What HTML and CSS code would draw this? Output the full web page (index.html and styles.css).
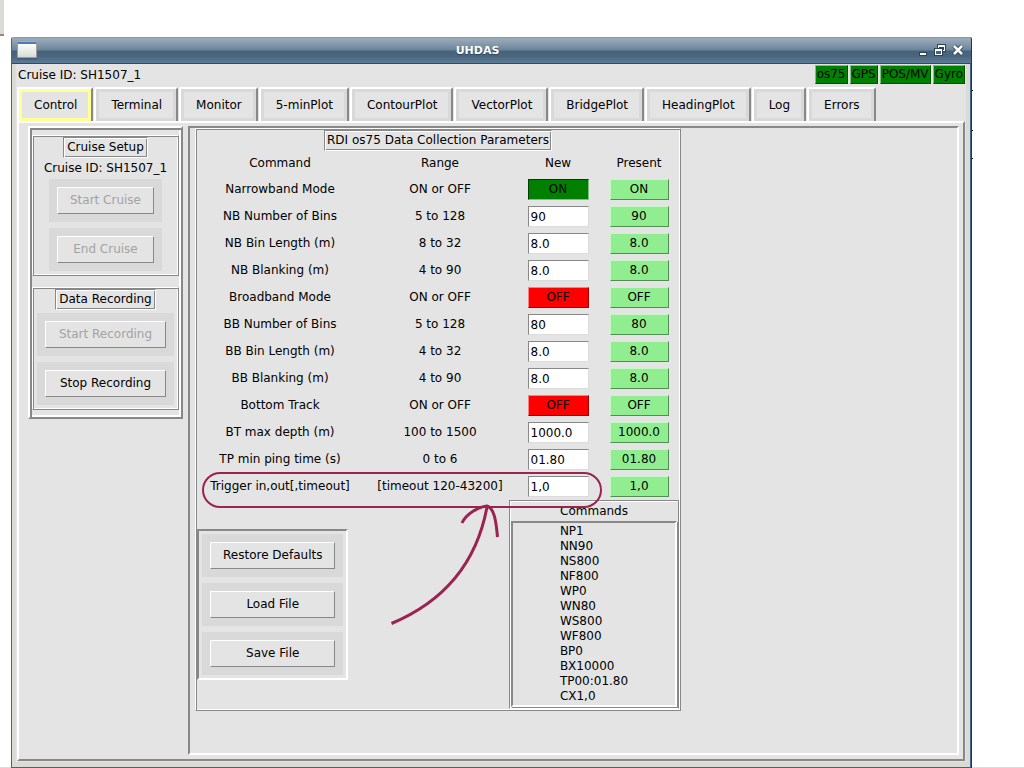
FILE: index.html
```
<!DOCTYPE html>
<html lang="en">
<head>
<meta charset="utf-8">
<title>UHDAS</title>
<link rel="stylesheet" href="styles.css">
</head>
<body>
<div class="desk-edge"></div>
<div class="desk-line"></div>
<i class="tick tick-a"></i><i class="tick tick-b"></i><i class="tick tick-c"></i>
<div class="window">
  <header class="titlebar">
    <svg class="app-icon" width="22" height="20" viewBox="0 0 22 20" aria-hidden="true">
      <defs><linearGradient id="g" x1="0" y1="0" x2="0" y2="1"><stop offset="0" stop-color="#fff"/><stop offset="1" stop-color="#d9dcd6"/></linearGradient></defs>
      <rect x="1" y="1" width="20" height="18" rx="1" fill="#38536b" opacity=".5"/>
      <rect x="1" y="1" width="20" height="16" rx="1" fill="#9a9d9a"/>
      <rect x="2" y="2" width="18" height="14" fill="url(#g)"/>
      <rect x="2" y="1" width="18" height="2" fill="#4a7ab8"/>
      <rect x="2" y="0" width="18" height="1" fill="#a5aeb8"/>
    </svg>
    <h1 class="title">UHDAS</h1>
    <div class="win-controls">
      <button class="win-btn" aria-label="Minimize"><svg width="12" height="14" viewBox="0 0 12 14"><rect x="2" y="8" width="8" height="4" fill="#2b4258"/><rect x="3" y="9" width="6" height="2" fill="#fff"/></svg></button>
      <button class="win-btn" aria-label="Restore"><svg width="14" height="14" viewBox="0 0 14 14"><path d="M4 0h9v8h-3v4H1V4h3z" fill="#2b4258"/><path d="M5 1h7v6h-2V6h1V3H6v1H5z" fill="#fff"/><path d="M2 5h7v6H2z" fill="#fff"/><path d="M3 7h5v3H3z" fill="#486480"/></svg></button>
      <button class="win-btn" aria-label="Close"><svg width="14" height="14" viewBox="0 0 14 14"><path d="M3 2l8 8M11 2l-8 8" stroke="#2b4258" stroke-width="4.500"/><path d="M3 2l8 8M11 2l-8 8" stroke="#fff" stroke-width="2.500"/></svg></button>
    </div>
  </header>
  <div class="body">
    <div class="status">
      <span class="status-text">Cruise ID: SH1507_1</span>
      <div class="lamps"><span class="lamp">os75</span><span class="lamp">GPS</span><span class="lamp">POS/MV</span><span class="lamp">Gyro</span></div>
    </div>
    <nav class="tabs" role="tablist">
      <button class="tab selected" role="tab" aria-selected="true">Control</button>
      <button class="tab" role="tab">Terminal</button>
      <button class="tab" role="tab">Monitor</button>
      <button class="tab" role="tab">5-minPlot</button>
      <button class="tab" role="tab">ContourPlot</button>
      <button class="tab" role="tab">VectorPlot</button>
      <button class="tab" role="tab">BridgePlot</button>
      <button class="tab" role="tab">HeadingPlot</button>
      <button class="tab" role="tab">Log</button>
      <button class="tab" role="tab">Errors</button>
    </nav>
    <main class="page">
      <aside class="side">
        <section class="group">
          <h2 class="caption">Cruise Setup</h2>
          <p class="cruise">Cruise ID: SH1507_1</p>
          <div class="pads narrow">
            <div class="pad"><button class="btn" disabled>Start Cruise</button></div>
            <div class="pad"><button class="btn" disabled>End Cruise</button></div>
          </div>
        </section>
        <section class="group">
          <h2 class="caption">Data Recording</h2>
          <div class="pads">
            <div class="pad"><button class="btn" disabled>Start Recording</button></div>
            <div class="pad"><button class="btn">Stop Recording</button></div>
          </div>
        </section>
      </aside>
      <div class="work">
        <section class="params">
          <h2 class="caption snug">RDI os75 Data Collection Parameters</h2>
          <table class="grid">
            <colgroup><col class="c-cmd"><col class="c-range"><col class="c-new"><col class="c-now"></colgroup>
            <thead><tr><th>Command</th><th>Range</th><th>New</th><th>Present</th></tr></thead>
            <tbody>
              <tr><td>Narrowband Mode</td><td>ON or OFF</td><td><button class="toggle on" aria-label="Narrowband Mode">ON</button></td><td><span class="now">ON</span></td></tr>
              <tr><td><label for="f1">NB Number of Bins</label></td><td>5 to 128</td><td><input class="field" id="f1" value="90"></td><td><span class="now">90</span></td></tr>
              <tr><td><label for="f2">NB Bin Length (m)</label></td><td>8 to 32</td><td><input class="field" id="f2" value="8.0"></td><td><span class="now">8.0</span></td></tr>
              <tr><td><label for="f3">NB Blanking (m)</label></td><td>4 to 90</td><td><input class="field" id="f3" value="8.0"></td><td><span class="now">8.0</span></td></tr>
              <tr><td>Broadband Mode</td><td>ON or OFF</td><td><button class="toggle off" aria-label="Broadband Mode">OFF</button></td><td><span class="now">OFF</span></td></tr>
              <tr><td><label for="f4">BB Number of Bins</label></td><td>5 to 128</td><td><input class="field" id="f4" value="80"></td><td><span class="now">80</span></td></tr>
              <tr><td><label for="f5">BB Bin Length (m)</label></td><td>4 to 32</td><td><input class="field" id="f5" value="8.0"></td><td><span class="now">8.0</span></td></tr>
              <tr><td><label for="f6">BB Blanking (m)</label></td><td>4 to 90</td><td><input class="field" id="f6" value="8.0"></td><td><span class="now">8.0</span></td></tr>
              <tr><td>Bottom Track</td><td>ON or OFF</td><td><button class="toggle off" aria-label="Bottom Track">OFF</button></td><td><span class="now">OFF</span></td></tr>
              <tr><td><label for="f7">BT max depth (m)</label></td><td>100 to 1500</td><td><input class="field" id="f7" value="1000.0"></td><td><span class="now">1000.0</span></td></tr>
              <tr><td><label for="f8">TP min ping time (s)</label></td><td>0 to 6</td><td><input class="field" id="f8" value="01.80"></td><td><span class="now">01.80</span></td></tr>
              <tr><td><label for="f9">Trigger in,out[,timeout]</label></td><td>[timeout 120-43200]</td><td><input class="field" id="f9" value="1,0"></td><td><span class="now">1,0</span></td></tr>
            </tbody>
          </table>
          <div class="lower">
            <div class="pads files">
              <div class="pad"><button class="btn">Restore Defaults</button></div>
              <div class="pad"><button class="btn">Load File</button></div>
              <div class="pad"><button class="btn">Save File</button></div>
            </div>
            <section class="commands">
              <h3 class="cmd-title">Commands</h3>
              <div class="cmd-box"><ul class="cmd-list"><li>NP1</li><li>NN90</li><li>NS800</li><li>NF800</li><li>WP0</li><li>WN80</li><li>WS800</li><li>WF800</li><li>BP0</li><li>BX10000</li><li>TP00:01.80</li><li>CX1,0</li></ul></div>
            </section>
          </div>
          <svg class="markup" width="410" height="160" viewBox="0 0 410 160" aria-hidden="true">
            <g fill="none" stroke="#9a2350">
              <rect x="3" y="3" width="398" height="34" rx="17" stroke-width="2"/>
              <path d="M191.500 153.500C245 131 277 91 287 37" stroke-width="3"/>
              <path d="M262 53C266 44 278 37 287 36C294 38 296 50 297.500 67" stroke-width="3"/>
            </g>
          </svg>
        </section>
      </div>
    </main>
  </div>
</div>
</body>
</html>
```
FILE: styles.css
```
* { box-sizing: border-box; }
body {
  margin: 0;
  min-height: 100vh;
  padding: 37px 52px 0 11px;
  display: flex;
  background: #fff;
  color: #000;
  font: 12px/15px "DejaVu Sans", sans-serif;
}
button, input { font: inherit; color: inherit; }
h1, h2, h3, p, ul { margin: 0; padding: 0; font: inherit; list-style: none; }

.desk-edge { position: absolute; left: 0; top: 0; width: 4px; height: 36px; background: #dcdad5; border-bottom: 2px solid #8d8a84; }
.desk-line { position: absolute; left: 0; right: 0; bottom: 0; height: 1px; background: #dcdcdc; }
.tick { position: absolute; right: 51px; width: 1px; height: 1px; background: #000; }
.tick-a { top: 90px; }
.tick-b { top: 130px; }
.tick-c { top: 158px; }

.window {
  position: relative;
  flex: 1;
  display: flex;
  flex-direction: column;
  background: #dcdad5;
  border: 1px solid;
  border-width: 0 1px 1px;
  border-color: #1d3550 #1d3550 #1d3550 #3f6389;
  box-shadow: inset -1px -1px #3f6389;
  border-radius: 2px 2px 0 0;
}
.titlebar {
  display: flex;
  align-items: center;
  height: 27px;
  padding: 0 6px 0 4px;
  background: linear-gradient(#8397a9 0, #9aabba 2px, #6b8499 13px, #47627b 14px, #4a667f 19px, #5c7b96 26px, #2f4a63 26px);
  border-radius: 2px 2px 0 0;
}
.app-icon { flex: none; }
.title { flex: 1; text-align: center; color: #fff; font-size: 11px; font-weight: bold; text-shadow: 0 1px 1px #2b4258; }
.win-controls { display: flex; gap: 4px; }
.win-btn { display: flex; padding: 0; border: 0; background: none; }

.body { flex: 1; display: flex; flex-direction: column; margin: 0 5px 6px 4px; background: #e4e4e4; }
.status { display: flex; justify-content: space-between; padding: 1px 1px 0 2px; line-height: 19px; }
.status-text { padding-top: 1px; }
.lamps { display: flex; align-self: flex-start; gap: 2px; }
.lamp { padding: 0 1px; line-height: 17px; color: #000; background: #008000; border: 1px solid; border-color: #7fbf7f #005000 #005000 #7fbf7f; }
.tabs { display: flex; gap: 1px; padding: 2px 0 0 1px; }
.tab {
  height: 34px;
  padding: 0 14px 0 15px;
  background: #e4e4e4;
  border: solid;
  border-width: 2px 2px 0;
  border-color: #fff #888 #888 #fff;
  border-radius: 2px 2px 0 0;
  box-shadow: inset 0 0 0 3px #d9d9d9;
}
.tab.selected { box-shadow: inset 0 0 0 3px #ffff99; }
.page {
  flex: 1;
  display: flex;
  align-items: flex-start;
  gap: 5px;
  margin: 0 1px 1px;
  padding: 3px 4px 4px 9px;
  border: 2px solid;
  border-color: #fff #888 #888 #fff;
}
.side {
  display: flex;
  flex-direction: column;
  gap: 11px;
  min-width: 155px;
  padding: 7px 2px 7px;
  border: 2px solid;
  border-color: #fff #888 #888 #fff;
  box-shadow: inset 2px 2px #888, inset -2px -2px #fff;
}
.group, .params {
  border: 1px solid;
  border-color: #fff #888 #888 #fff;
  box-shadow: inset 1px 1px #888, inset -1px -1px #fff;
}
.group { display: flex; flex-direction: column; align-items: center; padding: 1px 4px 4px; }
.caption {
  padding: 2px 3px;
  border: 1px solid;
  border-color: #888 #fff #fff #888;
  box-shadow: inset 1px 1px #fff, inset -1px -1px #888;
}
.snug { padding: 2px; }
.cruise { padding: 3px 0; }
.pads { display: flex; flex-direction: column; gap: 6px; align-self: stretch; margin-top: 3px; }
.narrow { align-self: center; margin-top: 0; }
.pad { display: flex; padding: 8px; background: #d9d9d9; }
.btn { flex: 1; height: 27px; padding: 0 12px; background: #e4e4e4; border: 1px solid; border-color: #fff #888 #888 #fff; }
.btn:disabled { color: #a3a3a3; }

.work { flex: 1; align-self: stretch; padding: 0 5px 42px; border: 2px solid; border-color: #888 #fff #fff #888; }
.params { position: relative; width: fit-content; display: flex; flex-direction: column; align-items: center; padding: 1px 1px 1px; }
.grid { border-collapse: collapse; table-layout: fixed; }
.grid th, .grid td { padding: 0; font-weight: normal; text-align: center; }
.grid th { height: 25px; }
.grid td { height: 27px; }
.c-cmd { width: 166px; }
.c-range { width: 154px; }
.c-new { width: 82px; }
.c-now { width: 80px; }
.field, .toggle, .now { display: block; width: 61px; height: 21px; margin: 0 auto; border: 1px solid; }
.field { padding: 0 2px; background: #fff; border-color: #888 #dcdcdc #dcdcdc #888; }
.toggle { padding: 0; line-height: 17px; }
.on { background: #008000; border-color: #004000 #7fbf7f #7fbf7f #004000; }
.off { background: #f00; border-color: #ff7f7f #900 #900 #ff7f7f; }
.now { width: 59px; line-height: 19px; background: #90ee90; border-color: #c7f6c7 #4f8f4f #4f8f4f #c7f6c7; }

.lower { align-self: stretch; display: flex; justify-content: space-between; align-items: center; }
.files { align-self: center; margin: 0; padding: 3px; border: 2px solid; border-color: #888 #fff #fff #888; }
.commands { min-width: 170px; padding: 1px; border: 1px solid; border-color: #888 #888 #fff #888; box-shadow: inset 1px 1px #fff; }
.cmd-title { padding: 2px; text-align: center; }
.cmd-box { padding: 1px 0 1px; border: 2px solid; border-color: #888 #fff #fff #888; box-shadow: 1px 1px #888; }
.cmd-list { width: fit-content; margin: 0 auto; }
.markup { position: absolute; left: 4px; top: 341px; }
```
